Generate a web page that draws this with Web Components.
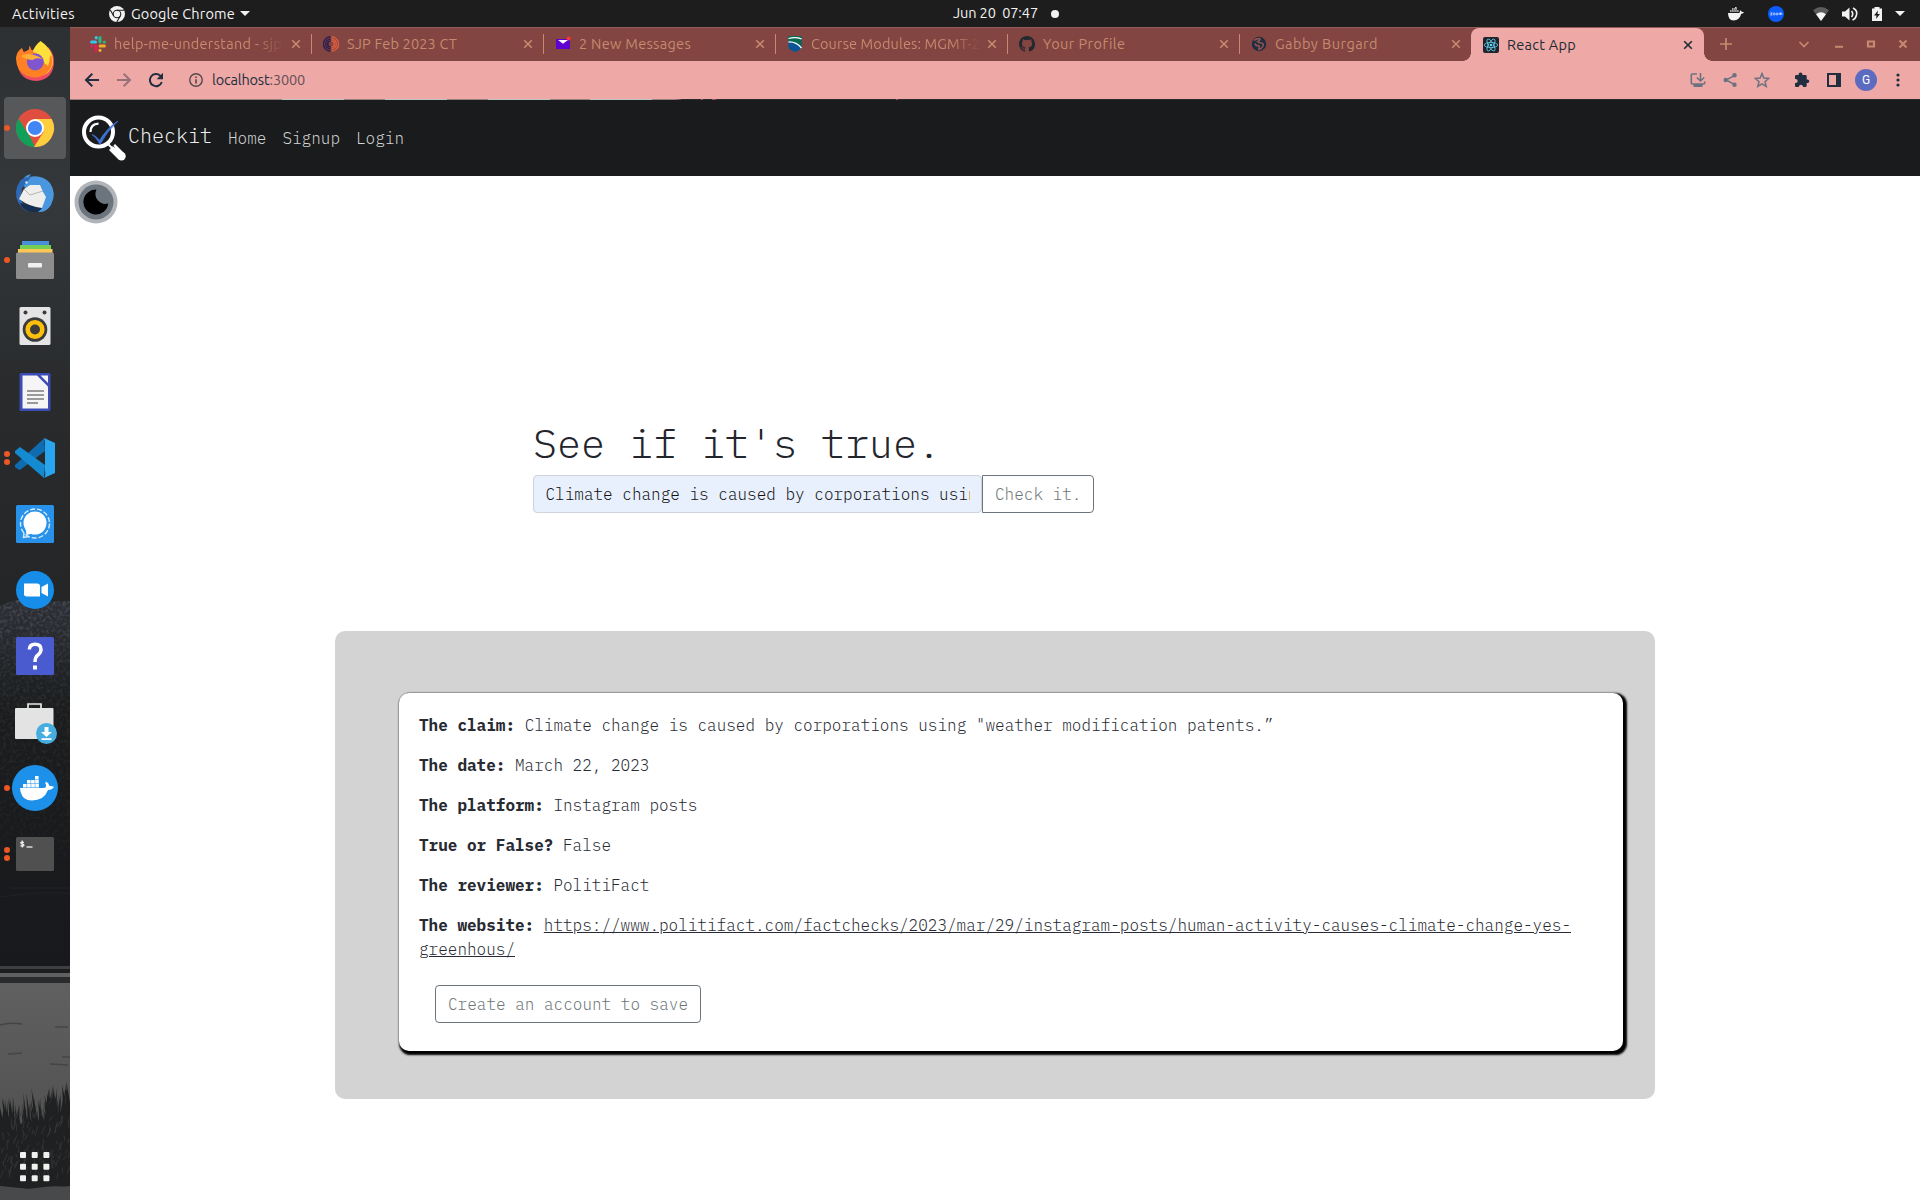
<!DOCTYPE html>
<html lang="en">
<head>
<meta charset="utf-8">
<title>React App</title>
<style>
html,body{margin:0;width:1920px;height:1200px;overflow:hidden;background:#fff}
body{font-family:Ubuntu,"Noto Sans","Open Sans",sans-serif}
</style>
</head>
<body>
<desk-top></desk-top>
<script>
const ICONS = {
chromeMono:['0 0 16 16',`<circle cx="8" cy="8" r="8" fill="#f2f2f2"/><circle cx="8" cy="8" r="3.8" fill="none" stroke="#1d1d1d" stroke-width="1.1"/><path d="M8 4.2H15M4.7 9.9L1.3 4M11.3 9.9L7.8 16" stroke="#1d1d1d" stroke-width="1.1"/>`],
tri:['0 0 10 5',`<path d="M0 0H10L5 5Z" fill="#f2f2f2"/>`],
dockerMono:['0 0 16 14',`<path d="M0 6H11.5C11.7 4.6 12 3.8 12.8 3.2L13.7 4.7L16 5.2C15.4 6.6 14 6.8 13.2 6.8C12 11.2 9.5 13.5 5.5 13.5C1.8 13.5 .2 10.5 0 6Z" fill="#f2f2f2"/><path d="M2 4H11M4 2H9M7 .5H9" stroke="#d5d5d5" stroke-width="1.7" stroke-dasharray="1.6 .5"/>`],
zoomMono:['0 0 16 16',`<circle cx="8" cy="8" r="8" fill="#0b5cff"/><path d="M2.3 6.9H4.3L2.4 9H4.4M11.2 9V7.1H13.8V9M12.5 7V9" fill="none" stroke="#cfe0ff" stroke-width=".8"/><circle cx="6.2" cy="8" r="1" fill="none" stroke="#cfe0ff" stroke-width=".8"/><circle cx="9" cy="8" r="1" fill="none" stroke="#cfe0ff" stroke-width=".8"/>`],
wifi:['0 0 16 14',`<path d="M0 3.2Q8 -3 16 3.2L8 14Z" fill="#5c5c5c"/><path d="M3 7.2Q8 3.4 13 7.2L8 14Z" fill="#f5f5f5"/>`],
volume:['0 0 16 14',`<path d="M0 4.5H3L7.5 .5V13.5L3 9.5H0Z" fill="#f2f2f2"/><path d="M9.5 4Q12 7 9.5 10M11 1Q16 3.5 14.3 8.500Q13.500 12 10.500 13" fill="none" stroke="#f2f2f2" stroke-width="1.6"/>`],
battery:['0 0 10 14',`<path d="M0 1.500H2.500V0H7.500V1.500H10V14H0Z" fill="#f2f2f2"/><path d="M6 3.500L2 8.500H4.500L4 12L8 7H5.500Z" fill="#1d1d1d"/>`],
slack:['0 0 16 16',`<g stroke-linecap="round" stroke-width="3.2"><path d="M1.700 6H5.400M6.200 1.700V1.800" stroke="#36c5f0"/><path d="M10 1.700V5.800M14.300 6V6" stroke="#2eb67d"/><path d="M10.200 10H14.300M10 14.300V14.300" stroke="#ecb22e"/><path d="M6 10.200V14.300M1.700 10V10" stroke="#e01e5a"/></g>`],
sjp:['0 0 16 16',`<g fill="none" stroke-width="1.500"><path d="M7.700 .8A7.200 7.200 0 0 0 7.700 15.200M7.700 3A5 5 0 0 0 7.700 13M7.700 5A3 3 0 0 0 7.700 11" stroke="#2b1e50"/><path d="M8.300 .8A7.200 7.200 0 0 1 8.300 15.200M8.300 3A5 5 0 0 1 8.300 13M8.300 5A3 3 0 0 1 8.300 11" stroke="#d95c3d"/></g>`],
mail:['0 0 16 16',`<path d="M1 3H15V13H1Z" fill="#6001d2"/><path d="M3 4H13L8 7.700Z" fill="#fff"/><circle cx="13.600" cy="2.600" r="2" fill="#ff333a"/>`],
course:['0 0 16 16',`<path d="M1.500 0H14.500V11Q14 14 8 16Q2 14 1.500 11Z" fill="#0b5596"/><path d="M1.500 0H14.500V11Q9 5.500 1.500 5Z" fill="#076a50"/><path d="M1.500 2.500Q8 .5 14.500 2.800M1.500 6Q9 5.500 14.500 12" stroke="#fff" stroke-width="1.300" fill="none"/>`],
github:['0 0 16 16',`<path fill="#24292f" d="M8 0C3.580 0 0 3.580 0 8c0 3.540 2.290 6.530 5.470 7.590.4.070.55-.17.55-.38 0-.19-.01-.82-.01-1.490-2.010.37-2.530-.49-2.690-.94-.09-.23-.48-.94-.82-1.130-.28-.15-.68-.52-.01-.53.630-.01 1.080.58 1.230.82.720 1.210 1.870.87 2.330.66.070-.52.28-.87.51-1.070-1.780-.2-3.640-.89-3.640-3.950 0-.87.310-1.590.82-2.150-.08-.2-.36-1.020.08-2.120 0 0 .67-.21 2.200.82a7.600 7.600 0 0 1 4 0c1.530-1.040 2.200-.82 2.200-.82.44 1.100.16 1.920.08 2.120.51.56.82 1.270.82 2.150 0 3.070-1.870 3.750-3.650 3.950.29.25.54.73.54 1.480 0 1.070-.01 1.930-.01 2.200 0 .21.15.46.55.38A8 8 0 0 0 16 8c0-4.420-3.580-8-8-8Z"/>`],
globe:['0 0 16 16',`<circle cx="8" cy="8" r="7.200" fill="#202c40"/><path d="M3.200 4.500Q5.500 2 9 2.800Q9 4.800 6.500 5.600Q7.500 7 10.500 7Q13 7.500 12 10Q10.500 13 8 13.500Q8.500 11 8 9.800Q4.500 10 4 7.500" fill="none" stroke="#93534e" stroke-width="1.600"/>`],
react:['0 0 16 16',`<rect width="16" height="16" rx="2" fill="#20232a"/><g fill="none" stroke="#61dafb" stroke-width=".75"><ellipse cx="8" cy="8" rx="6.700" ry="2.600"/><ellipse cx="8" cy="8" rx="6.700" ry="2.600" transform="rotate(60 8 8)"/><ellipse cx="8" cy="8" rx="6.700" ry="2.600" transform="rotate(120 8 8)"/></g><circle cx="8" cy="8" r="1.300" fill="#61dafb"/>`],
x:['0 0 10 10',`<path d="M1.200 1.200L8.800 8.800M8.800 1.200L1.200 8.800" stroke="currentColor" stroke-width="1.600"/>`],
plus:['0 0 12 12',`<path d="M6 0V12M0 6H12" stroke="currentColor" stroke-width="1.700"/>`],
chev:['0 0 12 12',`<path d="M1.500 4L6 8.500L10.500 4" fill="none" stroke="currentColor" stroke-width="1.700"/>`],
min:['0 0 10 10',`<path d="M1 7.800H9" stroke="currentColor" stroke-width="2"/>`],
max:['0 0 10 10',`<path d="M2 2.500H8V7.500H2Z" fill="none" stroke="currentColor" stroke-width="2.200"/>`],
wx:['0 0 10 10',`<path d="M1.500 1.500L8.500 8.500M8.500 1.500L1.500 8.500" stroke="currentColor" stroke-width="2"/>`],
back:['0 0 16 16',`<path d="M15 8H2.500M8.300 1.700L2 8L8.300 14.300" fill="none" stroke="currentColor" stroke-width="2"/>`],
fwd:['0 0 16 16',`<path d="M1 8H13.500M7.700 1.700L14 8L7.700 14.300" fill="none" stroke="currentColor" stroke-width="2"/>`],
reload:['0 0 16 16',`<path d="M13.800 10A6.100 6.100 0 1 1 12.300 3.700L14 5.400" fill="none" stroke="currentColor" stroke-width="2"/><path d="M15 .8V7.200H8.700Z" fill="currentColor"/>`],
info:['0 0 14 14',`<circle cx="7" cy="7" r="6.200" fill="none" stroke="#54474c" stroke-width="1.400"/><path d="M7 6.200V10.500M7 3.500V5" stroke="#54474c" stroke-width="1.600"/>`],
install:['0 0 16 16',`<path d="M7 2H2Q1.300 2 1.300 3V11Q1.300 12 2.300 12H13.700Q14.700 12 14.700 11V9.500M10.500 1V8.500M6.800 5.500L10.500 9L14.200 5.500" fill="none" stroke="#6d7280" stroke-width="1.600"/><path d="M3.500 12H12.500V15H3.500Z" fill="#6d7280"/>`],
share:['0 0 16 16',`<path d="M13 3.400L4 8L13 12.600" fill="none" stroke="#6d7280" stroke-width="1.500"/><g fill="#6d7280"><circle cx="12.500" cy="3.300" r="2.200"/><circle cx="3.700" cy="8" r="2.200"/><circle cx="12.500" cy="12.700" r="2.200"/></g>`],
star:['0 0 16 16',`<path d="M8 1.600L9.900 6.100L14.700 6.500L11 9.700L12.200 14.400L8 11.900L3.800 14.400L5 9.700L1.300 6.500L6.100 6.100Z" fill="none" stroke="#6d7280" stroke-width="1.500"/>`],
puzzle:['0 0 16 16',`<path fill="#222d40" d="M13.500 7.400H12.700V4.400Q12.700 3 11.300 3H8.400V2.300A1.900 1.900 0 0 0 4.600 2.300V3H2.300Q1 3 1 4.300V6.900H1.600A2.100 2.100 0 0 1 1.600 11.100H1V13.700Q1 15 2.300 15H4.900V14.300A2.100 2.100 0 0 1 9 14.300V15H11.300Q12.700 15 12.700 13.700V11H13.500A1.800 1.800 0 0 0 13.500 7.400Z"/>`],
panel:['0 0 14 14',`<path d="M0 0H14V14H0ZM2 2V12H9V2Z" fill="#222d40" fill-rule="evenodd"/>`],
dots:['0 0 4 14',`<g fill="#222d40"><circle cx="2" cy="2" r="1.600"/><circle cx="2" cy="7" r="1.600"/><circle cx="2" cy="12" r="1.600"/></g>`],
logo:['0 0 44 46',`<circle cx="16.500" cy="17" r="14.500" fill="none" stroke="#fff" stroke-width="4"/><path d="M8.500 17Q8.500 9 16.500 8.700" fill="none" stroke="#fff" stroke-width="2.200"/><path d="M30 32L39.500 41.500" stroke="#fff" stroke-width="8.500"/><circle cx="39.500" cy="41.200" r="4.200" fill="#fff"/><path d="M26 29L32 35" stroke="#fff" stroke-width="2"/><path d="M28.300 28L32.500 32.200" stroke="#1a1c1d" stroke-width="1"/><path d="M10 19.500Q14.500 21 17.500 25.500Q25 13 36 6Q25 16 18 29.500Q15 23 10 19.500Z" fill="#3f73d6" stroke="#3f73d6" stroke-width=".8"/>`],
moon:['0 0 44 44',`<circle cx="22" cy="22" r="21.500" fill="#b1b5b9"/><circle cx="22" cy="22" r="17.500" fill="#6c757d"/><path d="M22.500 9.500A10 10 0 0 0 34.300 23.500A12.500 12.500 0 1 1 22.500 9.500Z" fill="#000"/>`],
firefox:['0 0 62 62',`<path d="M13 22Q11 50 33 50Q50 48 50 30Q50 22 44 16Z" fill="#ef4d63"/><path d="M36.500 10Q51 20 48.500 34Q46 44 36 44L28 22Q31 14 36.500 10Z" fill="#ffe03b"/><path d="M18 17L20 22Q23 19 25 18.500Q25 15 26 15Q27 21 34 23Q40 25 41 34L47 24Q51 36 41 43.500Q33 48.500 23 45Q12 40 12 27Q13 20 18 17Z" fill="#ff8124"/><path d="M40 16Q49 26 44 35L34 24Q39 21 40 16Z" fill="#ffdf3a"/><circle cx="31.300" cy="31" r="8.500" fill="#8056cf"/><path d="M17 25Q25 20 39 28Q31 26 29 29Q23 29 17 25Z" fill="#ffae36"/>`],
chrome:['0 0 62 62',`<circle cx="31" cy="31" r="19" fill="#e04e3f"/><path d="M14.500 21.500L26 40L31 50A19 19 0 0 1 14.500 21.500Z" fill="#10a05a"/><path d="M31 22H47.700A19 19 0 0 1 30 50L39.500 35Z" fill="#ffce3f"/><circle cx="31" cy="31" r="9" fill="#fff"/><circle cx="31" cy="31" r="7.100" fill="#4285f4"/>`],
thunderbird:['0 0 62 62',`<path d="M20 15Q22 12 27 11L25 14Q38 11 46 20Q53 30 47 42Q42 50 34 49Q42 43 35 36L18 22Z" fill="#4a97e0"/><path d="M16 18Q9 28 14 39Q18 46 24 49Q18 43 17 33L18 25L27 14Q19 14 16 18Z" fill="#2f68b4"/><path d="M16 40L38 45Q34 51 24 48Q18 46 16 40Z" fill="#162e4f"/><path d="M20 26L26 22L36 22L39 29L42 34L38 45Q26 44 15 36Z" fill="#eeeeec"/><path d="M20 26L26 32L39 28" fill="none" stroke="#b6b6b6" stroke-width="1"/><circle cx="22.500" cy="19.500" r="1.200" fill="#dcecff"/>`],
files:['0 0 62 62',`<path d="M18 12H45V18H18Z" fill="#4a8fdc"/><path d="M16 16H47V22H16Z" fill="#76cf55"/><path d="M14 20H48.500V25H14Z" fill="#fcc755"/><rect x="12" y="23.500" width="38" height="26.500" rx="1.500" fill="#8d8d8d"/><rect x="24" y="34" width="14" height="4.500" rx="1" fill="#f0f0f0"/>`],
music:['0 0 62 62',`<rect x="15.500" y="12" width="31" height="38" rx="1.500" fill="#e4e4e4"/><circle cx="21.500" cy="17.500" r="2" fill="#3b3b3b"/><circle cx="40.500" cy="17.500" r="2" fill="#3b3b3b"/><circle cx="31" cy="34.500" r="12.300" fill="#3b3b3b"/><circle cx="31" cy="34.500" r="7.300" fill="none" stroke="#fbbf0c" stroke-width="4.600"/>`],
writer:['0 0 62 62',`<rect x="15.500" y="12" width="31" height="38" rx="1.500" fill="#3b4cb5"/><path d="M18.500 14.500H33L44 25.500V47.500H18.500Z" fill="#f5f5f5"/><path d="M36.500 14.500H44V22Z" fill="#f5f5f5"/><path d="M23 30H40M23 34H40M23 38H40M23 42H34" stroke="#7c7c7c" stroke-width="1.500"/>`],
vscode:['0 0 62 62',`<path d="M11 38L40 11.500L41 24L16 43Q14 43 11 40Z" fill="#0f6cb0"/><path d="M11 24L16 20L41 38L40 51L11 26Z" fill="#148bd0"/><path d="M40 11L51 16V46L40 51Q42 49 41 44V18Q41 13 40 11Z" fill="#28a5ee"/>`],
signal:['0 0 62 62',`<rect x="12" y="12" width="38" height="38" rx="1.500" fill="#2892ea"/><circle cx="31" cy="30.500" r="14.500" fill="none" stroke="#d8edff" stroke-width="1.400" stroke-dasharray="5 2"/><path d="M20 40L19.500 44.500L25 43.500" stroke="#d8edff" stroke-width="1.400" fill="none"/><circle cx="31" cy="30" r="11.500" fill="#fff"/><path d="M21.500 34L22.500 42L30 40Z" fill="#fff"/>`],
zoom:['0 0 62 62',`<circle cx="31" cy="31" r="19" fill="#168de9"/><path d="M20 24.500H33Q36 24.500 36 27V37.500H23Q20 37.500 20 35ZM37.500 28L44 24.500V37.500L37.500 34Z" fill="#fff"/>`],
help:['0 0 62 62',`<rect x="12" y="12" width="38" height="38" rx="1.500" fill="#4a5bd0"/><path d="M25.300 24.500Q25.500 19.300 31 19.300Q37 19.300 37 24.500Q37 27.500 34 29.800Q31 32 31 37" fill="none" stroke="#fff" stroke-width="3.500"/><rect x="29" y="40.500" width="4" height="4" fill="#fff"/>`],
software:['0 0 62 62',`<path d="M24 18V13H37V18" fill="none" stroke="#e6e6e6" stroke-width="1.700"/><rect x="11" y="17" width="38.500" height="31" rx="1" fill="#e3e3e3"/><circle cx="42.500" cy="42.500" r="10.500" fill="#46ade0"/><path d="M40.500 36H44.500V41H48L42.500 46L37 41H40.500ZM37.500 47.200H47.500V49H37.500Z" fill="#fff"/>`],
docker:['0 0 62 62',`<circle cx="31" cy="31" r="23" fill="#1d91ea"/><path d="M16 31H39.500Q42.500 31 42 28Q40.500 26 42 24.500Q45 26 45.500 29Q48 28.500 50 30Q48 33 44 33Q40 43.500 28 43.500Q17 43.500 16 31Z" fill="#fff"/><g stroke="#fff" stroke-width="3.400" stroke-dasharray="3.600 .5"><path d="M19 28.700H35M23 24.700H35M31 20.700H34.600"/></g>`],
terminal:['0 0 62 62',`<rect x="12" y="14" width="38" height="34" rx="1.500" fill="#505050"/><path d="M20 19.500Q16.500 18.500 16.800 20.200Q17 21 18.500 21.200Q20.300 21.500 19.800 22.800Q19 23.500 16.500 22.600M18.300 17.500V24.500" fill="none" stroke="#eee" stroke-width="1.200"/><path d="M22.500 24H28.500" stroke="#eee" stroke-width="1.300"/>`],
apps:['0 0 30 30',`<g fill="#f0f0ee"><rect width="6" height="6" rx="1"/><rect x="11.700" width="6" height="6" rx="1"/><rect x="23.400" width="6" height="6" rx="1"/><rect y="11.700" width="6" height="6" rx="1"/><rect x="11.700" y="11.700" width="6" height="6" rx="1"/><rect x="23.400" y="11.700" width="6" height="6" rx="1"/><rect y="23.300" width="6" height="6" rx="1"/><rect x="11.700" y="23.300" width="6" height="6" rx="1"/><rect x="23.400" y="23.300" width="6" height="6" rx="1"/></g>`]
};
const define = (name, html, after) => customElements.define(name, class extends HTMLElement {
  connectedCallback() {
    if (this.shadowRoot) return;
    this.attachShadow({mode: 'open'}).innerHTML = typeof html === 'function' ? html(this) : html;
    if (after) after(this);
  }
});

define('g-icon', el => {
  const [box, body] = ICONS[el.getAttribute('name')];
  const w = el.getAttribute('w') || 16, h = el.getAttribute('h') || w;
  return `<style>:host{display:block;flex:none;width:${w}px;height:${h}px}svg{display:block;width:100%;height:100%}</style><svg viewBox="${box}">${body}</svg>`;
});

/* Label whose tracking is adjusted so that its run is exactly w pixels wide. */
define('fit-text', `<style>:host{display:block;flex:none;white-space:pre}span{display:inline-block}</style><span><slot></slot></span>`, el => {
  const s = el.shadowRoot.querySelector('span'), n = el.textContent.length, w = +el.getAttribute('w');
  s.style.letterSpacing = ((w - s.getBoundingClientRect().width) / n) + 'px';
});

define('top-bar', `<style>
:host{display:flex;height:27px;background:#1d1d1d;color:#f2f2f2;font-size:14.500px;line-height:27px;justify-content:space-between}
div{display:flex;align-items:center;height:27px}
.l{width:760px;padding-left:12px;box-sizing:border-box}.r{width:760px;justify-content:flex-end;padding-right:15px;box-sizing:border-box}
.c{width:400px;line-height:26px}
.c fit-text{height:27px}
.dot{width:8px;height:8px;border-radius:50%;background:#f2f2f2;margin-left:12.500px}
.c fit-text{margin-left:193px}
</style>
<div class="l"><fit-text w="63">Activities</fit-text><g-icon name="chromeMono" w="16" style="margin:0 6px 0 34px"></g-icon><fit-text w="104">Google Chrome</fit-text><g-icon name="tri" w="10" h="5" style="margin-left:5px"></g-icon></div>
<div class="c"><fit-text w="85">Jun 20  07:47</fit-text><span class="dot"></span></div>
<div class="r"><g-icon name="dockerMono" w="16" h="14"></g-icon><g-icon name="zoomMono" w="16" style="margin-left:24px"></g-icon><g-icon name="wifi" w="16" h="14" style="margin-left:29px"></g-icon><g-icon name="volume" w="16" h="14" style="margin-left:13px"></g-icon><g-icon name="battery" w="10" h="14" style="margin-left:14px"></g-icon><g-icon name="tri" w="10" h="5" style="margin-left:13px"></g-icon></div>`);

define('dock-item', el => {
  const n = +el.getAttribute('dots') || 0;
  return `<style>:host{display:block;position:relative;width:62px;height:62px;flex:none;border-radius:4px}
:host([active]){background:#57585a}
.d{position:absolute;left:0;top:0;height:62px;display:flex;flex-direction:column;justify-content:center;gap:2.500px}
i{width:6px;height:6px;border-radius:50%;background:#ec5724}</style>
<g-icon name="${el.getAttribute('icon')}" w="62"></g-icon><div class="d">${'<i></i>'.repeat(n)}</div>`;
});

function landscape() {
  let seed = 7; const r = () => (seed = (seed * 16807) % 2147483647) / 2147483647;
  let g = '', s = '';
  for (let i = 0; i < 260; i++) {
    const x = r() * 76 - 3, base = 1112 - x * .24 + r() * 50, lean = (r() - .4) * 12;
    g += `M${x.toFixed(1)} ${(base + 24).toFixed(1)}L${(x + lean).toFixed(1)} ${(base - 10 - r() * 8).toFixed(1)}L${(x + 4).toFixed(1)} ${(base + 24).toFixed(1)}Z`;
  }
  for (let i = 0; i < 110; i++) s += `M${(r() * 70).toFixed(1)} ${(1115 + r() * 65).toFixed(1)}l${(r() * 6 - 2).toFixed(1)} ${(-3 - r() * 6).toFixed(1)}`;
  return `<svg width="70" height="1173" viewBox="0 27 70 1173">
<defs><linearGradient id="sky" x2="0" y2="1"><stop offset="0" stop-color="#2d3032"/><stop offset=".3" stop-color="#34383a"/><stop offset=".6" stop-color="#292b2d"/><stop offset="1" stop-color="#242527"/></linearGradient>
<linearGradient id="hill" x2="0" y2="1"><stop offset="0" stop-color="#2d2f36"/><stop offset=".14" stop-color="#24272b"/><stop offset=".3" stop-color="#1a1c1d"/><stop offset="1" stop-color="#17191c"/></linearGradient>
<linearGradient id="water" x2="0" y2="1"><stop offset="0" stop-color="#606060"/><stop offset=".5" stop-color="#555"/><stop offset="1" stop-color="#484848"/></linearGradient>
<linearGradient id="fadeG" x2="0" y2="1"><stop offset="0" stop-color="#fff"/><stop offset=".3" stop-color="#777"/><stop offset="1" stop-color="#222"/></linearGradient><mask id="fade"><rect y="590" width="70" height="270" fill="url(#fadeG)"/></mask>
<filter id="grain" x="0" y="0" width="1" height="1"><feTurbulence type="fractalNoise" baseFrequency=".3" numOctaves="3"/><feColorMatrix values="0 0 0 0 .5  0 0 0 0 .52  0 0 0 0 .57  1.200 0 0 0 -.5"/><feComposite in2="SourceGraphic" operator="in"/></filter></defs>
<rect y="27" width="70" height="600" fill="url(#sky)"/>
<path d="M0 606L12 601L25 599L42 602L70 601V970H0Z" fill="url(#hill)"/>
<g mask="url(#fade)"><path d="M0 606L12 601L25 599L42 602L70 601V860H0Z" filter="url(#grain)" opacity=".5"/></g>
<path d="M10 888H70M0 897L35 893H70" stroke="#212325" fill="none"/>
<rect y="966" width="70" height="3" fill="#3e3f40"/><rect y="969" width="70" height="4" fill="#1c1d1e"/><rect y="973" width="70" height="4" fill="#606060"/><rect y="977" width="70" height="6" fill="#2a2b2c"/>
<rect y="983" width="70" height="217" fill="url(#water)"/>
<path d="M0 1025Q10 1022 22 1024M55 1027H68M8 1054L22 1053M50 1064L68 1065M62 1057H70" stroke="#444546" stroke-width="1.500" fill="none"/>
<path d="${g}M0 1128L40 1120L70 1112V1186L40 1190L0 1186Z" fill="#1f2021"/><path d="${s}" stroke="#36373a" stroke-width=".8"/>
<path d="M0 1186Q20 1191 36 1188T70 1187V1200H0Z" fill="#48494a"/></svg>`;
}
define('side-dock', () => `<style>:host{display:grid;width:70px;height:1173px;flex:none;overflow:hidden}
svg,nav{grid-area:1/1}svg{display:block}
nav{z-index:1;display:flex;flex-direction:column;gap:4px;padding:4px 4px 18px;box-sizing:border-box;height:1173px}
.apps{margin:auto 0 0 16.200px}</style>${landscape()}
<nav><dock-item icon="firefox"></dock-item><dock-item icon="chrome" active dots="1"></dock-item><dock-item icon="thunderbird"></dock-item><dock-item icon="files" dots="1"></dock-item><dock-item icon="music"></dock-item><dock-item icon="writer"></dock-item><dock-item icon="vscode" dots="2"></dock-item><dock-item icon="signal"></dock-item><dock-item icon="zoom"></dock-item><dock-item icon="help"></dock-item><dock-item icon="software"></dock-item><dock-item icon="docker" dots="1"></dock-item><dock-item icon="terminal" dots="2"></dock-item><g-icon class="apps" name="apps" w="30"></g-icon></nav>`);

define('browser-tab', el => `<style>
:host{display:flex;align-items:center;box-sizing:border-box;width:232px;height:34px;padding-left:12px;color:#c58a6f;flex:none;font-size:14.500px;line-height:34px;position:relative}
:host([first]){padding-left:11px}
:host(:not([active]):not([last]))::after{content:"";position:absolute;right:-1px;top:7px;width:1px;height:20px;background:#c58a6f}
:host([active]){background:#eea9a6;color:#202a35;border-radius:8px 8px 0 0;width:233px;height:33px;margin-top:1px;line-height:33px}
:host([active])::before,:host([active])::after{content:"";position:absolute;bottom:0;width:8px;height:8px}
:host([active])::before{left:-8px;background:radial-gradient(circle at 0 0,#0000 7.500px,#eea9a6 8px)}
:host([active])::after{right:-8px;background:radial-gradient(circle at 100% 0,#0000 7.500px,#eea9a6 8px)}
.t{width:169px;margin-left:8px;overflow:hidden;height:34px;flex:none}
:host([first]) .t{width:170px}
:host([fade]) .t{-webkit-mask-image:linear-gradient(90deg,#000 140px,#0000 170px)}
</style><g-icon name="${el.getAttribute('icon')}" w="16"></g-icon><div class="t"><fit-text w="${el.getAttribute('w')}">${el.getAttribute('label')}</fit-text></div><g-icon name="x" w="10" style="margin-left:7px"></g-icon>`);

define('tab-strip', `<style>:host{display:flex;height:34px;background:#824541;box-shadow:inset 0 1px #925c58;padding-left:9px;align-items:center;color:#c58a6f}
.w{display:flex;margin-left:auto;padding-right:12px;align-items:center;height:32px}</style>
<browser-tab icon="slack" label="help-me-understand - sjp" w="168" fade first></browser-tab><browser-tab icon="sjp" label="SJP Feb 2023 CT" w="110"></browser-tab><browser-tab icon="mail" label="2 New Messages" w="112"></browser-tab><browser-tab icon="course" label="Course Modules: MGMT-2" w="169" fade></browser-tab><browser-tab icon="github" label="Your Profile" w="82"></browser-tab><browser-tab icon="globe" label="Gabby Burgard" w="103" last></browser-tab><browser-tab icon="react" label="React App" w="69" active></browser-tab>
<g-icon name="plus" w="12" style="margin-left:16px"></g-icon><div class="w"><g-icon name="chev" w="12"></g-icon><g-icon name="min" w="10" style="margin-left:24px"></g-icon><g-icon name="max" w="10" style="margin-left:22px"></g-icon><g-icon name="wx" w="10" style="margin-left:22px"></g-icon></div>`);

define('tool-bar', `<style>:host{display:flex;height:38px;background:#eea9a6;align-items:center;padding:0 20px 0 14px;color:#222d40;font-size:14.500px;line-height:37px}
.r{margin-left:auto;display:flex;align-items:center}
.a{width:22px;height:22px;border-radius:50%;background:#5c6bc0;color:#fff;text-align:center;font:12px/22px Roboto,sans-serif;margin-left:14px}</style>
<g-icon name="back"></g-icon><g-icon name="fwd" style="margin-left:16px;color:#98707a"></g-icon><g-icon name="reload" style="margin-left:16px"></g-icon><g-icon name="info" w="14" style="margin-left:25px"></g-icon><fit-text w="93" style="margin-left:9px;height:38px">localhost<b style="font-weight:400;color:#674f55">:3000</b></fit-text>
<div class="r"><g-icon name="install"></g-icon><g-icon name="share" style="margin-left:16px"></g-icon><g-icon name="star" style="margin-left:16px"></g-icon><g-icon name="puzzle" style="margin-left:24px"></g-icon><g-icon name="panel" w="14" style="margin-left:17px"></g-icon><span class="a">G</span><g-icon name="dots" w="4" h="14" style="margin-left:19px"></g-icon></div>`);

define('site-nav', `<style>:host{display:flex;height:77px;box-sizing:border-box;background:linear-gradient(90deg,#9b807d 212px,#b9c4c4 212px 274px,#9b807d 274px 315px,#b9c4c4 315px 377px,#9b807d 377px 418px,#b9c4c4 418px 480px,#9b807d 480px 520px,#b9c4c4 520px 582px,#9b807d 582px 605px,#7b3c5c 610px,#2a2d2d 612px 631px,#9b4a78 631px 633px,#2a2d2d 633px 642px,#9b4a78 642px 646px,#2a2d2d 646px 826px,#9b4a78 826px 828px,#2a2d2d 828px) 0 0/100% 1px no-repeat,#191b1c;color:#d2d3d3;align-items:center;padding:1px 0 0 12px;font-size:16px}
.b{font-size:20px;color:#f0f0f0;margin:-5px 0 0 2px;line-height:30px}a{margin-left:16px;line-height:24px}</style>
<g-icon name="logo" w="44" h="46" style="margin-top:-1px"></g-icon><span class="b">Checkit</span><a>Home</a><a>Signup</a><a>Login</a>`);

define('outline-button', `<style>:host{display:block;box-sizing:border-box;height:38px;border:1px solid #6c757d;border-radius:4px;padding:6px 12px;line-height:24px;color:#6c7578;white-space:nowrap;background:#fff}</style><slot></slot>`);

define('claim-search', `<style>:host{display:block;margin-left:463px}
h1{margin:0;font-size:40px;font-weight:300;line-height:48px;color:#23252d}
.g{display:flex;margin-top:8px}
.i{box-sizing:border-box;width:449px;height:38px;border:1px solid #ced4da;border-radius:4px;background:#e8f0fe;padding:6px 11.500px;line-height:24px;color:#111;font-weight:300}
.i div{overflow:hidden;white-space:nowrap}
outline-button{border-radius:0 4px 4px 0}</style>
<h1>See if it's true.</h1><div class="g"><div class="i"><div>Climate change is caused by corporations using</div></div><outline-button>Check it.</outline-button></div>`);

define('claim-row', el => `<style>:host{display:block;margin-bottom:16px;line-height:24px}b{font-weight:700}</style><b>${el.getAttribute('label')}</b> <slot></slot>`);

define('claim-card', `<style>:host{display:block;margin:118px 0 0 265px;width:1320px;height:468px;box-sizing:border-box;background:#d3d3d3;border-radius:10px;padding:62px 32px 48px 64px}
article{height:358px;box-sizing:border-box;background:#fff;border-radius:10px;box-shadow:2px 2px 2px 1.500px #000;padding:20px;color:#282b33}
outline-button{display:inline-block;margin:8px 0 0 16px}</style>
<article><claim-row label="The claim:">Climate change is caused by corporations using "weather modification patents.”</claim-row><claim-row label="The date:">March 22, 2023</claim-row><claim-row label="The platform:">Instagram posts</claim-row><claim-row label="True or False?">False</claim-row><claim-row label="The reviewer:">PolitiFact</claim-row><claim-row label="The website:"><u>https://www.politifact.com/factchecks/2023/mar/29/instagram-posts/human-activity-causes-climate-change-yes-<br>greenhous/</u></claim-row><outline-button>Create an account to save</outline-button></article>`);

define('web-page', `<style>:host{display:block;font-family:"IBM Plex Mono","Liberation Mono",monospace;font-weight:300;font-size:16px;background:#fff}
.t{padding:3.500px 0 0 3.500px;height:43.500px}claim-search{margin-top:196px}</style>
<site-nav></site-nav><div class="t"><g-icon name="moon" w="44"></g-icon></div><claim-search></claim-search><claim-card></claim-card>`);

define('desk-top', `<style>:host{display:flex;flex-direction:column;width:1920px;height:1200px;overflow:hidden}.m{display:flex;flex:1}main{flex:1;min-width:0}</style>
<top-bar></top-bar><div class="m"><side-dock></side-dock><main><tab-strip></tab-strip><tool-bar></tool-bar><web-page></web-page></main></div>`);
</script>
</body>
</html>
